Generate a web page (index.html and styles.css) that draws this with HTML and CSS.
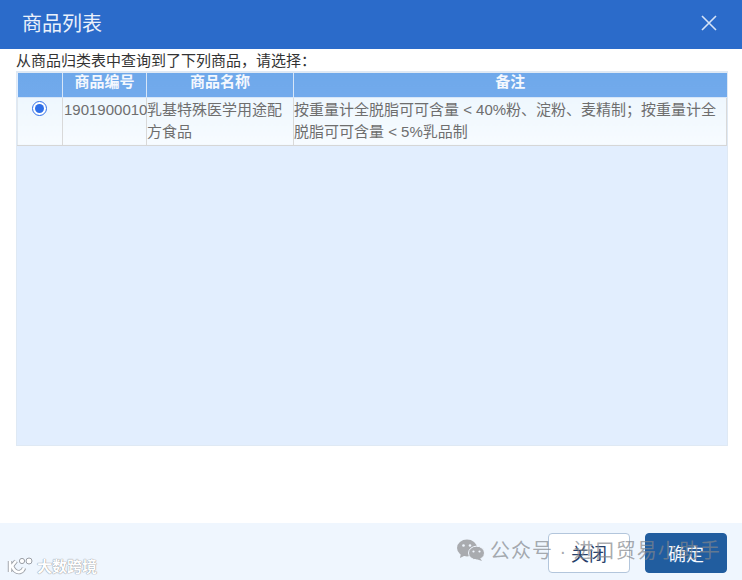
FILE: index.html
```html
<!DOCTYPE html>
<html lang="zh-CN">
<head>
    <meta charset="UTF-8">
    <title>商品列表</title>
    <link rel="stylesheet" href="styles.css">
</head>
<body>
    <div class="dialog">
        <div class="dialog-header">
            <span class="dialog-title">商品列表</span>
            <svg class="close-icon" width="18" height="18" viewBox="0 0 18 18">
                <path d="M2 2 L16 16 M16 2 L2 16" stroke="#d5e3f7" stroke-width="1.6" fill="none"/>
            </svg>
        </div>
        <div class="dialog-body">
            <div class="intro">从商品归类表中查询到了下列商品，请选择：</div>
            <div class="table-box">
                <table class="goods-table">
                    <thead>
                        <tr>
                            <th class="col-radio"></th>
                            <th class="col-code">商品编号</th>
                            <th class="col-name">商品名称</th>
                            <th>备注</th>
                        </tr>
                    </thead>
                    <tbody>
                        <tr>
                            <td class="cell-radio"><input type="radio" name="goods" checked></td>
                            <td>1901900010</td>
                            <td>乳基特殊医学用途配方食品</td>
                            <td>按重量计全脱脂可可含量 &lt; 40%粉、淀粉、麦精制；按重量计全脱脂可可含量 &lt; 5%乳品制</td>
                        </tr>
                    </tbody>
                </table>
            </div>
        </div>
        <div class="dialog-footer">
            <button type="button" class="btn btn-close">关闭</button>
            <button type="button" class="btn btn-ok">确定</button>
        </div>
    </div>

    <!-- watermarks over the footer -->
    <div class="mark-wechat">
        <svg width="28" height="22" viewBox="0 0 28 22">
            <ellipse cx="10" cy="9" rx="10" ry="8.5" fill="#a9abaf"/>
            <path d="M4 14 L3 19 L9 16 Z" fill="#a9abaf"/>
            <ellipse cx="19.5" cy="14" rx="8" ry="6.8" fill="#a9abaf" stroke="#f0f6fe" stroke-width="1"/>
            <path d="M23 19 L25 22 L19 20 Z" fill="#a9abaf"/>
            <circle cx="6.5" cy="6.5" r="1.3" fill="#f0f6fe"/>
            <circle cx="13" cy="6.5" r="1.3" fill="#f0f6fe"/>
            <circle cx="16.5" cy="12.5" r="1.1" fill="#f0f6fe"/>
            <circle cx="22.5" cy="12.5" r="1.1" fill="#f0f6fe"/>
        </svg>
        <span>公众号 · 进口贸易小助手</span>
    </div>
    <div class="mark-brand">
        <svg width="27" height="18" viewBox="0 0 27 18">
            <path d="M3 4 V15 M9 4 L5 9 Q8 16 13 15 Q16 14 17 11" stroke="#9b9fa6" stroke-width="4.4" fill="none"/>
            <path d="M3 4 V15 M9 4 L5 9 Q8 16 13 15 Q16 14 17 11" stroke="#fff" stroke-width="2.6" fill="none"/>
            <circle cx="15" cy="4" r="2.6" fill="#fff" stroke="#9b9fa6"/>
            <circle cx="22" cy="4" r="3" fill="#fff" stroke="#9b9fa6"/>
        </svg>
        <span>大数跨境</span>
    </div>
</body>
</html>
```

FILE: styles.css
```css
* {
    margin: 0;
    padding: 0;
    box-sizing: border-box;
}

html, body {
    height: 100%;
    overflow: hidden;
}

body {
    font-family: "Liberation Sans", "Noto Sans CJK SC", sans-serif;
    font-size: 15px;
    color: #555;
    background: #fff;
}

.dialog {
    height: 580px;
    display: flex;
    flex-direction: column;
}

.dialog-header {
    height: 49px;
    flex-shrink: 0;
    padding: 0 24px 4px 22px;
    display: flex;
    align-items: center;
    justify-content: space-between;
    background: #2b6bca;
}

.dialog-title {
    font-size: 20px;
    color: #eaf1fb;
}

.close-icon {
    display: block;
}

.dialog-body {
    flex: 1;
    padding: 2px 14px 0 16px;
}

.intro {
    height: 20px;
    line-height: 19px;
    font-size: 15px;
    color: #333;
}

.table-box {
    height: 375px;
    padding-top: 2px;
    border: 1px solid #dfe9f4;
    border-top-width: 0;
    background: #e2eefe;
    box-shadow: 0 2px 0 #dfe9f4 inset;
}

.goods-table {
    width: 710px;
    table-layout: fixed;
    border-collapse: collapse;
}

.goods-table th {
    height: 24px;
    padding-bottom: 5px;
    line-height: 18px;
    font-size: 15px;
    font-weight: bold;
    color: #f4f8fe;
    background: linear-gradient(#6ea8ea, #72aaec);
    border-right: 1px solid #d7e6f8;
    border-bottom: 1px solid #d7e6f8;
}

.goods-table th:last-child {
    border-right: 0;
}

.col-radio {
    width: 45px;
}

.col-code {
    width: 84px;
}

.col-name {
    width: 147px;
}

.goods-table td {
    height: 48px;
    vertical-align: top;
    padding-top: 1px;
    line-height: 22px;
    font-size: 15px;
    color: #6e6e6e;
    background: linear-gradient(#eef7fe, #f7fbff);
    border-right: 1px solid #d9d9d9;
    border-bottom: 1px solid #d6d6d6;
    white-space: normal;
}

.goods-table td:first-child {
    border-left: 1px solid #e2e8ee;
}

.goods-table td:nth-child(2) {
    white-space: nowrap;
    overflow: visible;
    padding-left: 1px;
}

.cell-radio {
    text-align: center;
}

.cell-radio input {
    width: 15px;
    height: 15px;
    display: block;
    margin: 2px auto 0 14px;
    accent-color: #2f6fe8;
}

.dialog-footer {
    height: 57px;
    flex-shrink: 0;
    padding: 10px 15px 0 0;
    display: flex;
    justify-content: flex-end;
    align-items: flex-start;
    gap: 15px;
    background: #eff6fe;
}

.btn {
    width: 82px;
    height: 40px;
    font-family: inherit;
    font-size: 18px;
    border-radius: 4px;
    cursor: pointer;
}

.btn-close {
    color: #27406b;
    background: #fff;
    border: 1px solid #b3c6dc;
}

.btn-ok {
    color: #f4f8fe;
    background: #215d9f;
    border: 1px solid #215d9f;
}

.mark-wechat {
    position: absolute;
    left: 457px;
    top: 535px;
    display: flex;
    align-items: center;
    gap: 5px;
    font-size: 20px;
    letter-spacing: 1px;
    color: rgba(130, 134, 140, 0.7);
    white-space: nowrap;
}

.mark-brand {
    position: absolute;
    left: 7px;
    top: 555px;
    display: flex;
    align-items: center;
    gap: 3px;
    font-size: 15px;
    font-weight: bold;
    color: #fff;
    text-shadow: 0 0 1px #8b8f96, 0 0 1px #8b8f96;
    white-space: nowrap;
}
```
